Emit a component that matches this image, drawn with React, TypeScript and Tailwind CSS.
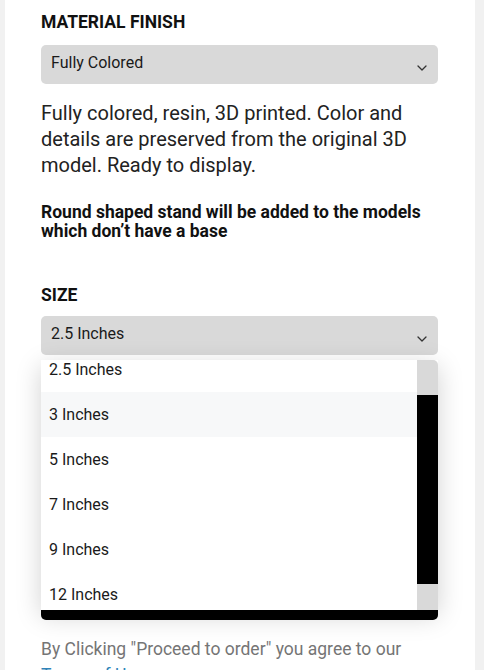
import React from 'react';

const sizes = ['2.5 Inches', '3 Inches', '5 Inches', '7 Inches', '9 Inches', '12 Inches'];

const Chevron = () => (
  <svg width="10" height="6" viewBox="0 0 10 6" fill="none" stroke="#333" strokeWidth="1.3" strokeLinecap="round" strokeLinejoin="round">
    <path d="M1 1l4 4 4-4" />
  </svg>
);

const SelectBox = ({ value }: { value: string }) => (
  <div className="h-[39px] rounded-[5px] bg-[#d9d9d9] flex items-center justify-between pl-[10px] pr-[11px]">
    <span className="text-[16px] text-[#1a1a1a] -mt-[4px]">{value}</span>
    <span className="mt-[6px]"><Chevron /></span>
  </div>
);

const App: React.FC = () => {
  return (
    <div className="h-[670px] overflow-hidden bg-[#f1f1f1] pl-[5px] pr-[9px]" style={{ fontFamily: 'Roboto, "Liberation Sans", sans-serif' }}>
      <div className="bg-white h-full pl-[36px] pr-[37px] pt-[10px]">
        <h3 className="text-[17.5px] leading-[24px] font-bold text-[#111] mb-[11px]">MATERIAL FINISH</h3>
        <SelectBox value="Fully Colored" />

        <p className="mt-[16px] text-[20px] leading-[26px] text-[#222]">
          Fully colored, resin, 3D printed. Color and details are preserved from the original 3D model. Ready to display.
        </p>

        <p className="mt-[25px] text-[17.5px] leading-[19px] font-bold text-[#111]">
          Round shaped stand will be added to the models which don’t have a base
        </p>

        <h3 className="mt-[42px] text-[17.5px] leading-[24px] font-bold text-[#111] mb-[9px]">SIZE</h3>

        <div className="relative">
          <SelectBox value="2.5 Inches" />

          {/* open dropdown list */}
          <div className="absolute left-0 right-0 top-[44px] h-[250px] z-10 flex bg-white shadow-[0_6px_24px_rgba(0,0,0,0.18)]">
            <div className="flex-1 overflow-hidden">
              <div className="-mt-[13px]">
                {sizes.map((s, i) => (
                  <div
                    key={s}
                    className={`h-[45px] flex items-center pl-[8px] text-[16px] text-[#1a1a1a] ${i === 1 ? 'bg-[#f7f8f9]' : 'bg-white'}`}
                  >
                    {s}
                  </div>
                ))}
              </div>
            </div>
            <div className="w-[21px] bg-[#d9d9d9] rounded-tr-[5px] flex flex-col">
              <div className="h-[35px]" />
              <div className="h-[189px] bg-black" />
            </div>
          </div>

          {/* content under the dropdown */}
          <div className="pt-[215px]">
            <div className="h-[50px] rounded-[5px] bg-black" />
          </div>
        </div>

        <p className="mt-[16px] text-[17.5px] leading-[26px] text-[#757575]">
          By Clicking "Proceed to order" you agree to our <span className="text-[#2f83b8]">Terms of Use</span>
        </p>
      </div>
    </div>
  );
};

export default App;
